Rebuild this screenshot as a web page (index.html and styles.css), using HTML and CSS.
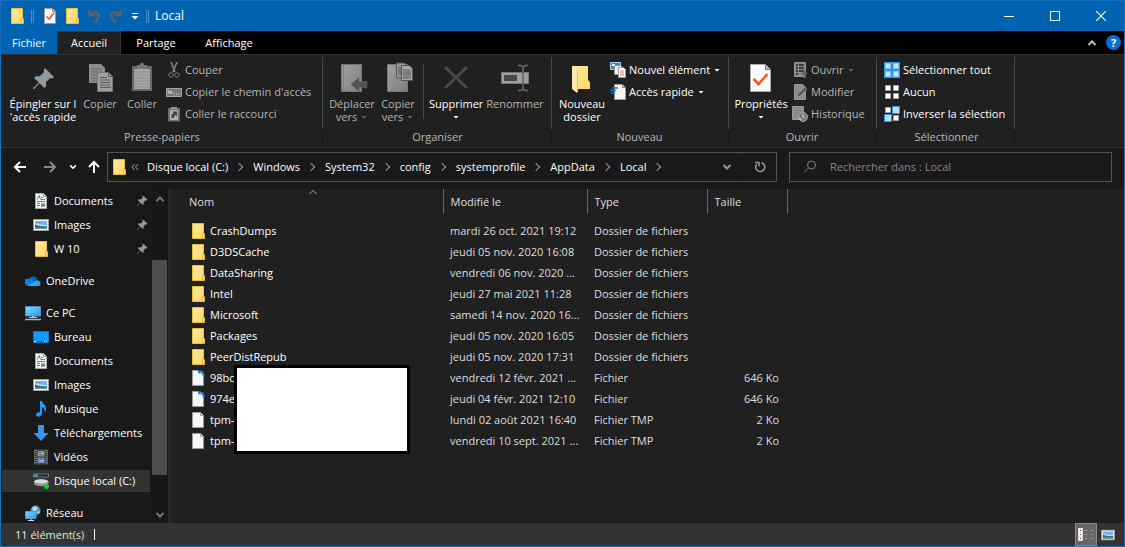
FILE: index.html
```html
<!DOCTYPE html>
<html lang="fr">
<head>
<meta charset="utf-8">
<title>Local</title>
<link rel="stylesheet" href="styles.css">
</head>
<body>
<svg class="defs" aria-hidden="true">
  <linearGradient id="gold" x1="0" y1="0" x2="1" y2="1"><stop offset="0" stop-color="#ffe89c"/><stop offset="1" stop-color="#ffd76a"/></linearGradient>
  <linearGradient id="steel" x1="0" y1="0" x2="1" y2="1"><stop offset="0" stop-color="#a2a2a2"/><stop offset="1" stop-color="#7e7e7e"/></linearGradient>
  <linearGradient id="sky" x1="0" y1="0" x2="1" y2="1"><stop offset="0" stop-color="#8ad4ff"/><stop offset="1" stop-color="#1f9cf0"/></linearGradient>
  <symbol id="folder" viewBox="0 0 16 16"><path d="M2.500.5h11v10l.5 1v4H2.500z" fill="url(#gold)" stroke="#e9bd3f"/><path d="M12.500 10.500h2v5h-2z" fill="#ffe28a" stroke="#e2b32f" stroke-width=".8"/></symbol>
  <symbol id="doc" viewBox="0 0 16 16"><path d="M2.500.5h8l3 3v12h-11z" fill="#f7f7f7" stroke="#9b9b9b"/><path d="M10.500.5v3h3" fill="#ddd" stroke="#9b9b9b"/></symbol>
  <symbol id="filelink" viewBox="0 0 16 16"><path d="M2.500.5h6l5 5v10h-11z" fill="#f4f6f8" stroke="#9b9b9b"/><path d="M8 0l5 1 2 5-2 1-1-3-4-1z" fill="#2b7fc6"/><path d="M10 2l3 3" stroke="#9fd0f5"/></symbol>
  <symbol id="check" viewBox="0 0 16 16"><path d="M2.500.5h8l3 3v12h-11z" fill="#fafafa" stroke="#9b9b9b"/><path d="M10.500.5v3h3" fill="#ccc" stroke="#888"/><path d="M4.500 8.500l2.500 2.500 5-6" fill="none" stroke="#f15a22" stroke-width="1.700"/></symbol>
  <symbol id="pin" viewBox="0 0 16 16"><path d="M9.600.8L15.200 6.400 14 7.300l-1.500-.2-2.300 2.600.1 2.700-1.200 1L6 10.400 1.500 15 .9 15.100 1 14.500 5.500 9.900 2.600 6.900l1-1.100 2.700.1L8.900 3.600 8.700 2z" fill="#8f9aa3"/></symbol>
  <symbol id="document" viewBox="0 0 16 16"><path d="M2.500.5h8l3 3v12h-11z" fill="#f7f7f7" stroke="#aaa"/><path d="M10.500.5v3h3" fill="#ddd" stroke="#999"/><path d="M4 6.500L6 2.500l1.500 4M8 4.500h2M8 6.500h4M4 8.500h8M4 10.500h3M4 12.500h3" fill="none" stroke="#2f8ad0"/><path d="M8 10h4v3.500H8z" fill="#59894e"/><path d="M8 10h4v1.500H8z" fill="#78b7ed"/></symbol>
  <symbol id="picture" viewBox="0 0 16 16"><path d="M.5 2.500h15v11H.5z" fill="#fff" stroke="#a0a0a0"/><path d="M2 4h12v8H2z" fill="#72aef2"/><path d="M2 6.500c4 0 4 1.500 12 1.500v1H2z" fill="#c9e4f6"/><path d="M2 7.500l5 1.500 7 .5V12H2z" fill="#35705b"/><path d="M2 10.500h12V12H2z" fill="#6c9099"/></symbol>
  <symbol id="cloud" viewBox="0 0 16 16"><path d="M4 6a4.500 4.500 0 0 1 8.500 1L9 11H2z" fill="#0864b8"/><path d="M1 12a3.200 3.200 0 0 1 3-6c3-.4 5 2 7 3l-2 4H3z" fill="#0f7ed8"/><path d="M2 13l7-4a4 4 0 0 1 4-1.500 3 3 0 0 1 1.500 5.200L13 13z" fill="#29a5ee"/></symbol>
  <symbol id="pc" viewBox="0 0 16 16"><path d="M.5 1.500h15v9.500H.5z" fill="url(#sky)" stroke="#4e92bf"/><path d="M4 12.500h8M7 11.500h2" stroke="#b8c7d3"/><path d="M0 14.500h16" stroke="#a9b7c2" stroke-width="1.500"/></symbol>
  <symbol id="desktop" viewBox="0 0 16 16"><path d="M.5 2.500h15v11H.5z" fill="#129cff" stroke="#0878cc"/><path d="M1 12.500h14" stroke="#0969b4"/><path d="M1 12.500h2M11 12.500h1M13 12.500h1" stroke="#d8efff"/></symbol>
  <symbol id="music" viewBox="0 0 16 16"><path d="M7 0h2c.3 3 4.500 4 4 8.500-.1 1.300-.8 2.500-1.500 3 .7-3.300-.5-4.500-2.500-5.500v6.500C9 15 6.500 16 4.500 15.500c-2-.6-2-3 0-4 1-.5 1.800-.4 2.500-.1z" fill="#14a0ff"/></symbol>
  <symbol id="download" viewBox="0 0 16 16"><path d="M5 0h6v8h4.500L8 16 .5 8H5z" fill="#3696e8"/></symbol>
  <symbol id="video" viewBox="0 0 16 16"><path d="M1.500 1h13v14h-13z" fill="#343434" stroke="#777" stroke-width=".7"/><path d="M3 1v14M13 1v14" stroke="#b0b0b0" stroke-dasharray="1 1"/><path d="M4.500 2h7v5.500h-7zM4.500 8.500h7V14h-7z" fill="#4b8ee6"/><path d="M5 5h3V3h3v3l-3 1H5zM5 13l3-3 3 1v2z" fill="#d7a431"/><path d="M6 6h4M7 10h2" stroke="#874c36"/></symbol>
  <symbol id="drive" viewBox="0 0 16 16"><path d="M.5 1h15v3H.5z" fill="#192630" stroke="#6d7b83"/><path d="M1 1.500h4v2H1z" fill="#27b0eb"/><path d="M1 8.500c2-3 12-3 14.500 0v2C13 14 4 14 1 11z" fill="#96999c"/><path d="M1 8.500c2-3 12-3 14.500 0-3 2.500-11 2.500-14.500 0z" fill="#d9dadb"/><circle cx="13.500" cy="13.500" r="2.500" fill="#20c72d"/></symbol>
  <symbol id="network" viewBox="0 0 16 16"><circle cx="10.500" cy="5.500" r="5" fill="#548bb0"/><path d="M7 3l3-2 3 2-2 3H8zM11 7l4-1-1 3z" fill="#b2dae8"/><path d="M.5 6.500h10.500v7H.5z" fill="url(#sky)" stroke="#4d9fce"/><path d="M3 15.500h6M6 14v1" stroke="#d4e1e9"/></symbol>
  <symbol id="undo" viewBox="0 0 14 16"><path d="M2 1v5.500h6M3 6C7 .8 13 4 12 8.500c-.6 3-3 4.500-5.500 6" fill="none" stroke="#56616b" stroke-width="2.600"/></symbol>
  <symbol id="down" viewBox="0 0 8 6"><path d="M1.500 2h5L4 4.500z" fill="currentColor"/></symbol>
  <symbol id="chev" viewBox="0 0 10 10"><path d="M1.500 3l3.500 3.500L8.500 3" fill="none" stroke="currentColor" stroke-width="2"/></symbol>
  <symbol id="thin" viewBox="0 0 10 10"><path d="M1.500 3l3.500 3.500L8.500 3" fill="none" stroke="currentColor"/></symbol>
  <symbol id="arrow" viewBox="0 0 14 14"><path d="M13 7H2M7 2L2 7l5 5" fill="none" stroke="currentColor" stroke-width="2"/></symbol>
</svg>

<div class="window">
  <header class="titlebar">
    <svg class="i16"><use href="#folder"/></svg>
    <span class="grip"></span>
    <button class="quick" aria-label="Propriétés"><svg class="i16"><use href="#check"/></svg></button>
    <button class="quick" aria-label="Nouveau dossier"><svg class="i16"><use href="#folder"/></svg></button>
    <button class="quick" aria-label="Annuler"><svg class="undo"><use href="#undo"/></svg></button>
    <button class="quick" aria-label="Rétablir"><svg class="undo redo"><use href="#undo"/></svg></button>
    <button class="quick more" aria-label="Personnaliser"><svg width="8" height="8"><path d="M1 1.500h6" stroke="#fff"/><path d="M.5 4h7L4 7.500z" fill="#fff"/></svg></button>
    <span class="grip"></span>
    <h1>Local</h1>
    <div class="winbuttons">
      <button aria-label="Réduire"><svg width="10" height="10"><path d="M0 5.500h10" stroke="#fff"/></svg></button>
      <button aria-label="Agrandir"><svg width="10" height="10"><path d="M.5.5h9v9h-9z" fill="none" stroke="#fff"/></svg></button>
      <button aria-label="Fermer"><svg width="10" height="10"><path d="M0 0l10 10M10 0L0 10" stroke="#fff" stroke-width="1.200"/></svg></button>
    </div>
  </header>

  <nav class="tabs">
    <button class="tab file">Fichier</button>
    <button class="tab active">Accueil</button>
    <button class="tab">Partage</button>
    <button class="tab wide">Affichage</button>
    <div class="tabtools">
      <button aria-label="Réduire le ruban"><svg class="i10 flip"><use href="#chev"/></svg></button>
      <button class="help" aria-label="Aide">?</button>
    </div>
  </nav>

  <section class="ribbon">
    <div class="group clip">
      <div class="tools">
        <button class="big pinbtn"><svg viewBox="0 0 32 32"><path d="M19 5l9 9-1.600 1.500-2.500-.3-4 4 .2 4-1.800 1.900-4.800-4.800L8 26l-1 .1.100-1 5.700-5.500-4.700-4.700 1.700-1.700 4 .1 4.200-4-.2-2.500z" fill="#8f9aa3" transform="translate(-1 1)"/></svg><span>Épingler sur l<br>'accès rapide</span></button>
        <button class="big off"><svg viewBox="0 0 32 32"><path d="M5 2h12l4 4v15H5z" fill="#8e8e8e"/><path d="M7 7h11M7 10h11M7 13h11M7 16h11M7 19h11" stroke="#666"/><path d="M13.500 10.500h11l4 4v15h-15z" fill="#a0a0a0" stroke="#777"/><path d="M24.500 10.500v4h4M16 15.500h7M16 18h10.500M16 20.500h10.500M16 23h10.500M16 25.500h10.500" fill="none" stroke="#585858"/></svg><span>Copier</span></button>
        <button class="big off"><svg viewBox="0 0 32 32"><path d="M6 4h20v25H6z" fill="#686868"/><path d="M8 7h16v20H8z" fill="#a7a7a7"/><path d="M11 3h3c0-3 4-3 4 0h3v4H11z" fill="#777"/><path d="M8 10h16M8 13h16M8 16h16M8 19h16M8 22h16M8 25h16" stroke="#8b8b8b"/></svg><span>Coller</span></button>
        <div class="stack">
          <button class="small off"><svg viewBox="0 0 16 16"><path d="M5 0l4 10M11 0L7 10" stroke="#858585" stroke-width="1.500"/><circle cx="5" cy="13" r="2.200" fill="none" stroke="#777"/><circle cx="11" cy="13" r="2.200" fill="none" stroke="#777"/></svg>Couper</button>
          <button class="small off"><svg viewBox="0 0 16 16"><path d="M.5 4.500h15v8H.5z" fill="#777" stroke="#a6a6a6"/><path d="M2 6l1.500 4L5 7l1.500 3M8 10h1M10 10h1M12 10h1" fill="none" stroke="#ddd"/></svg>Copier le chemin d'accès</button>
          <button class="small off"><svg viewBox="0 0 16 16"><path d="M2 2h12v13.500H2z" fill="#6f6f6f"/><path d="M4 4h8v10H4z" fill="#b2b2b2"/><path d="M5 1h6v2H5z" fill="#999"/><path d="M5.500 12V9l2-2L6 5.500h5v5L9.500 9 8 10.500V12z" fill="#444"/></svg>Coller le raccourci</button>
        </div>
      </div>
      <h2>Presse-papiers</h2>
    </div>

    <div class="group organise">
      <div class="tools">
        <button class="big off"><svg viewBox="0 0 32 32"><path d="M5.500 2.500h20v27h-20z" fill="url(#steel)" stroke="#777"/><path d="M7.500 3v26" stroke="#808080"/><path d="M15 22.500l8-7v4h8v6h-8v4z" fill="#535353" stroke="#666" stroke-width=".6"/></svg><span>Déplacer<br>vers <svg class="dd"><use href="#down"/></svg></span></button>
        <button class="big off"><svg viewBox="0 0 32 32"><path d="M5.500 2.500h20v27h-20z" fill="url(#steel)" stroke="#777"/><path d="M14.500 1h8l3 3v12h-11z" fill="#969696" stroke="#555"/><path d="M16 6h8M16 8h8M16 10h8M16 12h8" stroke="#555"/><path d="M19.500 3.500h8l3 3v12h-11z" fill="#a7a7a7" stroke="#555"/><path d="M21 8h8M21 10h8M21 12h8M21 14h8M21 16h8" stroke="#555"/></svg><span>Copier<br>vers <svg class="dd"><use href="#down"/></svg></span></button>
        <i class="split"></i>
        <button class="big"><svg viewBox="0 0 32 32"><path d="M5 5l22 21M27 5L5 26" stroke="#484848" stroke-width="3"/></svg><span>Supprimer<br><svg class="dd"><use href="#down"/></svg></span></button>
        <button class="big off"><svg viewBox="0 0 32 32"><path d="M2.500 10.500h27v11h-27z" fill="#a0a0a0" stroke="#777"/><path d="M5 13h13v6H5z" fill="#484848"/><path d="M19 3.500h3l2 1.500 2-1.500h3M24 5v23M19 28.500h3l2-1.500 2 1.500h3" fill="none" stroke="#666" stroke-width="1.600"/></svg><span>Renommer</span></button>
      </div>
      <h2>Organiser</h2>
    </div>

    <div class="group create">
      <div class="tools">
        <button class="big"><svg viewBox="0 0 32 32"><path d="M6 4h16v14l2 2v7H8z" fill="url(#gold)"/><path d="M6 4l5 4v23l-5-4z" fill="#ffe9a8"/><path d="M11.500 8v22" stroke="#e9bd54"/></svg><span>Nouveau<br>dossier</span></button>
        <div class="stack">
          <button class="small"><svg viewBox="0 0 16 16"><path d="M.5.5h10v7H.5z" fill="#2d89c8" stroke="#a4d5ef"/><path d="M2 2h3v2H2z" fill="#fff"/><path d="M4.500 3.500h6l2 2v7h-8z" fill="#eee" stroke="#999"/><path d="M8.500 5.500h5l2 2v8h-7z" fill="#fff" stroke="#999"/><path d="M10 9h4M10 11h4M10 13h4" stroke="#e37b7b"/></svg>Nouvel élément<svg class="dd"><use href="#down"/></svg></button>
          <button class="small"><svg viewBox="0 0 16 16"><path d="M4.500.5h8l3 3v12h-11z" fill="#f7f7f7" stroke="#999"/><path d="M12.500.5v3h3" fill="none" stroke="#777"/><path d="M2 4h6M0 6.500h6M1 9h4" stroke="#2a75b3" stroke-width="1.500"/></svg>Accès rapide<svg class="dd"><use href="#down"/></svg></button>
        </div>
      </div>
      <h2>Nouveau</h2>
    </div>

    <div class="group open">
      <div class="tools">
        <button class="big"><svg viewBox="0 0 32 32"><path d="M5.500 2.500h15l5 5v22h-20z" fill="#fafafa" stroke="#aaa"/><path d="M20.500 2.500v5h5" fill="#bbb" stroke="#777"/><path d="M8.500 17l5 5 9-10" fill="none" stroke="#f15a22" stroke-width="2.600"/></svg><span>Propriétés<br><svg class="dd"><use href="#down"/></svg></span></button>
        <div class="stack">
          <button class="small off"><svg viewBox="0 0 16 16"><path d="M2.500.5h11v14h-11z" fill="#888" stroke="#999"/><path d="M4 3h2M7 3h5M4 6h2M7 6h5M4 9h2M7 9h5M4 12h2" stroke="#3e3e3e" stroke-width="2"/><path d="M11 16v-4H9l3.500-4 3.500 4h-2v4z" fill="#666"/></svg>Ouvrir<svg class="dd"><use href="#down"/></svg></button>
          <button class="small off"><svg viewBox="0 0 16 16"><path d="M2.500.5h8l3 3v12h-11z" fill="#8d8d8d" stroke="#999"/><path d="M5 13l1-3 7-7 2 2-7 7z" fill="#555" stroke="#aaa" stroke-width=".5"/></svg>Modifier</button>
          <button class="small off"><svg viewBox="0 0 16 16"><path d="M.5.5h11v13H.5z" fill="#8b8b8b" stroke="#999"/><circle cx="11" cy="11" r="4.500" fill="#777" stroke="#aaa"/><path d="M11 8v3l2 1M7 12l3 2" fill="none" stroke="#ddd"/></svg>Historique</button>
        </div>
      </div>
      <h2>Ouvrir</h2>
    </div>

    <div class="group select">
      <div class="tools">
        <div class="stack">
          <button class="small"><svg viewBox="0 0 16 16"><path d="M0 0h16v16H0z" fill="#3097e6"/><path d="M1.500 1.500h5v5h-5zM9.500 1.500h5v5h-5zM1.500 9.500h5v5h-5zM9.500 9.500h5v5h-5z" fill="#c5e6ff" stroke="#77c3fa"/></svg>Sélectionner tout</button>
          <button class="small"><svg viewBox="0 0 16 16"><path d="M1.500 1.500h5v5h-5zM9.500 1.500h5v5h-5zM1.500 9.500h5v5h-5zM9.500 9.500h5v5h-5z" fill="#fff" stroke="#a5a5a5"/></svg>Aucun</button>
          <button class="small"><svg viewBox="0 0 16 16"><path d="M1.500 1.500h5v5h-5zM9.500 9.500h5v5h-5z" fill="#fff" stroke="#a5a5a5"/><path d="M8.500.5h7v7h-7zM.5 8.500h7v7h-7z" fill="#b6dfff" stroke="#3097e6"/></svg>Inverser la sélection</button>
        </div>
      </div>
      <h2>Sélectionner</h2>
    </div>
  </section>

  <div class="navbar">
    <div class="history">
      <button aria-label="Précédent"><svg class="i14"><use href="#arrow"/></svg></button>
      <button class="dim" aria-label="Suivant"><svg class="i14 mirror"><use href="#arrow"/></svg></button>
      <button class="recent" aria-label="Récents"><svg class="i8"><use href="#chev"/></svg></button>
      <button class="up" aria-label="Dossier parent"><svg class="i14 turn"><use href="#arrow"/></svg></button>
    </div>
    <div class="address">
      <svg class="i16"><use href="#folder"/></svg>
      <svg class="root" width="8" height="8"><path d="M3.500 1L1 4l2.500 3M7 1L4.500 4 7 7" fill="none" stroke="#999"/></svg>
      <ol class="crumbs">
        <li><a href="#">Disque local (C:)</a></li><li><a href="#">Windows</a></li><li><a href="#">System32</a></li><li><a href="#">config</a></li><li><a href="#">systemprofile</a></li><li><a href="#">AppData</a></li><li><a href="#">Local</a></li>
      </ol>
      <button class="hist" aria-label="Emplacements précédents"><svg class="i10"><use href="#chev"/></svg></button>
      <button class="refresh" aria-label="Actualiser"><svg width="12" height="12"><path d="M7.500 1.700A4.500 4.500 0 1 1 2.700 3.200M1 1.500h4v4" fill="none" stroke="#999" stroke-width="1.500"/></svg></button>
    </div>
    <label class="search">
      <svg width="14" height="14"><circle cx="8.500" cy="5" r="4" fill="none" stroke="#858585"/><path d="M5.500 8L1 12.500" stroke="#858585"/></svg>
      <input type="text" placeholder="Rechercher dans : Local" aria-label="Rechercher dans : Local">
    </label>
  </div>

  <main class="body">
    <nav class="tree">
      <ul>
        <li><a class="sub" href="#"><svg class="i16"><use href="#document"/></svg>Documents<svg class="pinned"><use href="#pin"/></svg></a></li>
        <li><a class="sub" href="#"><svg class="i16"><use href="#picture"/></svg>Images<svg class="pinned"><use href="#pin"/></svg></a></li>
        <li><a class="sub" href="#"><svg class="i16"><use href="#folder"/></svg>W 10<svg class="pinned"><use href="#pin"/></svg></a></li>
      </ul>
      <ul><li><a href="#"><svg class="i16"><use href="#cloud"/></svg>OneDrive</a></li></ul>
      <ul>
        <li><a href="#"><svg class="i16"><use href="#pc"/></svg>Ce PC</a></li>
        <li><a class="sub" href="#"><svg class="i16"><use href="#desktop"/></svg>Bureau</a></li>
        <li><a class="sub" href="#"><svg class="i16"><use href="#document"/></svg>Documents</a></li>
        <li><a class="sub" href="#"><svg class="i16"><use href="#picture"/></svg>Images</a></li>
        <li><a class="sub" href="#"><svg class="i16"><use href="#music"/></svg>Musique</a></li>
        <li><a class="sub" href="#"><svg class="i16"><use href="#download"/></svg>Téléchargements</a></li>
        <li><a class="sub" href="#"><svg class="i16"><use href="#video"/></svg>Vidéos</a></li>
        <li><a class="sub current" href="#"><svg class="i16"><use href="#drive"/></svg>Disque local (C:)</a></li>
      </ul>
      <ul><li><a href="#"><svg class="i16"><use href="#network"/></svg>Réseau</a></li></ul>
    </nav>
    <div class="scroll" aria-hidden="true">
      <svg class="i10 flip"><use href="#chev"/></svg>
      <div class="thumb"></div>
      <svg class="i10"><use href="#chev"/></svg>
    </div>
    <section class="files">
      <table>
        <colgroup><col class="c1"><col class="c2"><col class="c3"><col class="c4"></colgroup>
        <thead><tr><th>Nom<svg class="sort"><use href="#thin"/></svg></th><th>Modifié le</th><th>Type</th><th>Taille</th></tr></thead>
        <tbody>
          <tr><td><span><svg class="i16"><use href="#folder"/></svg>CrashDumps</span></td><td>mardi 26 oct. 2021 19:12</td><td>Dossier de fichiers</td><td></td></tr>
          <tr><td><span><svg class="i16"><use href="#folder"/></svg>D3DSCache</span></td><td>jeudi 05 nov. 2020 16:08</td><td>Dossier de fichiers</td><td></td></tr>
          <tr><td><span><svg class="i16"><use href="#folder"/></svg>DataSharing</span></td><td>vendredi 06 nov. 2020 ...</td><td>Dossier de fichiers</td><td></td></tr>
          <tr><td><span><svg class="i16"><use href="#folder"/></svg>Intel</span></td><td>jeudi 27 mai 2021 11:28</td><td>Dossier de fichiers</td><td></td></tr>
          <tr><td><span><svg class="i16"><use href="#folder"/></svg>Microsoft</span></td><td>samedi 14 nov. 2020 16...</td><td>Dossier de fichiers</td><td></td></tr>
          <tr><td><span><svg class="i16"><use href="#folder"/></svg>Packages</span></td><td>jeudi 05 nov. 2020 16:05</td><td>Dossier de fichiers</td><td></td></tr>
          <tr><td><span><svg class="i16"><use href="#folder"/></svg>PeerDistRepub</span></td><td>jeudi 05 nov. 2020 17:31</td><td>Dossier de fichiers</td><td></td></tr>
          <tr><td><span><svg class="i16"><use href="#filelink"/></svg>98bc</span></td><td>vendredi 12 févr. 2021 ...</td><td>Fichier</td><td>646 Ko</td></tr>
          <tr><td><span><svg class="i16"><use href="#filelink"/></svg>974e</span></td><td>jeudi 04 févr. 2021 12:10</td><td>Fichier</td><td>646 Ko</td></tr>
          <tr><td><span><svg class="i16"><use href="#doc"/></svg>tpm-</span></td><td>lundi 02 août 2021 16:40</td><td>Fichier TMP</td><td>2 Ko</td></tr>
          <tr><td><span><svg class="i16"><use href="#doc"/></svg>tpm-</span></td><td>vendredi 10 sept. 2021 ...</td><td>Fichier TMP</td><td>2 Ko</td></tr>
        </tbody>
      </table>
      <div class="mask"></div>
    </section>
  </main>

  <footer class="status">
    <span class="count">11 élément(s)</span>
    <button class="view on" aria-label="Détails"><svg width="16" height="14"><path d="M0 0h5v13H0z" fill="#ddd"/><path d="M1 1h3v3H1zM1 5h3v3H1zM1 9h3v3H1z" fill="#fff"/><path d="M2 2.500h1" stroke="#444"/><path d="M2 6.500h1" stroke="#1479e0"/><path d="M2 10.500h1" stroke="#d22"/><path d="M6 2.500h4M12 2.500h4M6 6.500h4M12 6.500h4M6 10.500h4M12 10.500h4" stroke="#888"/></svg></button>
    <button class="view" aria-label="Grandes icônes"><svg width="14" height="14" viewBox="0 0 16 16"><use href="#picture"/></svg></button>
  </footer>
</div>
</body>
</html>
```
FILE: styles.css
```css
* { box-sizing: border-box; }
html, body { height: 100%; }
body {
  margin: 0;
  background: #191919;
  color: #fff;
  font: 11px/16px "Open Sans", "Noto Sans", sans-serif;
}
button, input { font: inherit; color: inherit; background: none; border: 0; padding: 0; }
button { display: flex; align-items: center; justify-content: center; }
a { color: inherit; text-decoration: none; }
ul, ol { list-style: none; margin: 0; padding: 0; }
h1, h2 { margin: 0; font: inherit; }
svg { flex: none; display: block; }
.defs { position: absolute; width: 0; height: 0; }
.i8 { width: 8px; height: 8px; }
.i10 { width: 10px; height: 10px; }
.i14 { width: 14px; height: 14px; }
.i16 { width: 16px; height: 16px; }
.flip { transform: rotate(180deg); }
.mirror { transform: scaleX(-1); }
.turn { transform: rotate(90deg); }

.window {
  height: 100vh;
  display: flex;
  flex-direction: column;
  border: 1px solid #1470bd;
}
.window > * { flex-shrink: 0; }

.titlebar { display: flex; align-items: center; height: 30px; padding-left: 8px; background: #0063b1; }
.grip { width: 3px; height: 13px; margin-left: 6px; border: 1px solid #4b93cb; border-width: 0 1px; }
.titlebar .grip + .quick { margin-left: 5px; }
.quick { width: 22px; height: 22px; }
.undo { width: 14px; height: 15px; }
.redo { transform: scaleX(-1); }
.more { width: 16px; }
.more + .grip { margin-left: 3px; }
.titlebar h1 { margin-left: 6px; font-size: 12px; flex: 1; }
.winbuttons { display: flex; }
.winbuttons button { width: 46px; height: 30px; }

.tabs { display: flex; height: 23px; background: #000; }
.tab { width: 70px; }
.tab.file { width: 56px; background: #0063b1; }
.tab.active { width: 64px; background: #202020; border: 1px solid #333; border-bottom: 0; }
.tab.wide { width: 76px; }
.tabtools { display: flex; align-items: center; gap: 9px; margin-left: auto; padding-right: 3px; color: #bbb; }
.help { width: 15px; height: 15px; border-radius: 50%; background: #0b6fd0; color: #fff; font-weight: 700; }

.ribbon {
  display: flex;
  background: #202020;
  border: 1px solid #303030;
  border-width: 1px 0;
  padding: 2px 0;
}
.group {
  display: flex;
  flex-direction: column;
  padding: 2px 0 0 4px;
  background: linear-gradient(#484848 0 72px, #181818 72px) right / 1px 100% no-repeat;
}
.group h2 { color: #b8b8b8; text-align: center; line-height: 16px; }
.clip { width: 322px; padding-left: 6px; }
.clip h2 { padding-right: 6px; }
.organise { width: 229px; padding-left: 6px; }
.organise h2, .create h2 { padding-right: 6px; }
.create { width: 177px; }
.open { width: 148px; }
.open h2, .select h2 { padding-right: 6px; }
.select { width: 138px; padding-left: 7px; }
.tools { display: flex; height: 70px; }
.big { flex-direction: column; justify-content: flex-start; min-width: 42px; padding-top: 3px; line-height: 13px; }
.big > svg { width: 32px; height: 32px; }
.big > span { margin-top: 3px; white-space: nowrap; }
.pinbtn { min-width: 72px; }
.organise .big { min-width: 46px; }
.organise .split + .big { margin-left: 5px; min-width: 54px; }
.organise .split + .big + .big { min-width: 63px; }
.create .big { min-width: 52px; }
.open .big { min-width: 56px; }
.off { color: #b4b4b4; }
.off .dd { color: #666; }
.dd { display: inline-block; width: 8px; height: 6px; vertical-align: 1px; }
.split { width: 1px; height: 55px; margin: 5px 0 0 2px; background: #484848; }
.stack { display: flex; flex-direction: column; }
.clip .stack, .open .stack { margin-left: 3px; }
.create .stack { margin-left: 2px; }
.small { height: 22px; gap: 3px; justify-content: flex-start; white-space: nowrap; }
.small > svg { width: 16px; height: 16px; }
.small > .dd { width: 8px; height: 6px; }

.navbar { display: flex; align-items: center; padding: 4px 12px 7px 12px; }
.history { display: flex; align-items: center; width: 94px; }
.history .dim { margin-left: 16px; color: #888; }
.history .recent { margin-left: 12px; }
.history .up { margin-left: 10px; }
.address, .search { display: flex; align-items: center; height: 30px; border: 1px solid #535353; min-width: 0; }
.address { flex: 665; padding-left: 3px; }
.root { margin-left: 4px; }
.crumbs { display: flex; flex: 1; margin-left: 8px; min-width: 0; }
.crumbs li { display: flex; align-items: center; white-space: nowrap; }
.crumbs li::after {
  content: "";
  width: 5px;
  height: 5px;
  margin: 0 11px 0 8px;
  border: solid #999;
  border-width: 1px 1px 0 0;
  transform: rotate(45deg);
}
.address button { height: 28px; color: #999; }
.hist { width: 32px; }
.refresh { width: 33px; border-left: 1px solid #141414; }
.search { flex: 308; margin-left: 12px; padding-left: 13px; }
.search input { flex: 1; min-width: 0; margin-left: 13px; outline: 0; }
.search input::placeholder { color: #858585; opacity: 1; }

.window > .body { display: flex; flex: 1 1 0; min-height: 0; }
.tree { width: 149px; padding-left: 1px; overflow: hidden; }
.tree ul + ul { margin-top: 8px; }
.tree a { display: flex; align-items: center; gap: 5px; height: 24px; padding: 0 2px 0 23px; border: solid transparent; border-width: 1px 0; background-clip: padding-box; white-space: nowrap; }
.tree .sub { padding-left: 31px; }
.tree .current { background-color: #333; }
.pinned { width: 12px; height: 12px; margin-left: auto; }
.scroll { width: 18px; display: flex; flex-direction: column; align-items: center; padding: 5px 0 3px 1px; background: #171717; color: #777; }
.thumb { width: 15px; flex: 1; margin: 56px 0 35px; background: #4d4d4d; }
.files { position: relative; flex: 1; background: #202020; border-left: 2px solid #292929; }
.files table { border-collapse: collapse; table-layout: fixed; width: 617px; }
.c1 { width: 273px; }
.c2 { width: 144px; }
.c3 { width: 120px; }
.c4 { width: 80px; }
th { position: relative; height: 25px; padding: 0 0 0 7px; border-right: 1px solid #636363; font-weight: 400; text-align: left; color: #dedede; }
th:first-child { padding-left: 19px; }
.sort { position: absolute; top: -2px; left: 138px; width: 10px; height: 10px; transform: rotate(180deg); color: #aaa; }
tbody::before { content: ""; display: block; height: 6px; }
td { height: 21px; padding: 0 0 0 7px; color: #dedede; white-space: nowrap; }
td:first-child { padding-left: 20px; color: #fff; }
td:last-child { padding-right: 8px; text-align: right; }
td span { display: flex; align-items: center; gap: 4px; }
.mask { position: absolute; left: 64px; top: 176px; width: 176px; height: 89px; background: #fff; border: 3px solid #000; }

.status { display: flex; align-items: center; height: 23px; padding: 0 5px 0 14px; background: #333; }
.count { margin-right: auto; color: #e5e5d0; }
.count::after { content: ""; display: inline-block; height: 11px; margin-left: 10px; border-left: 1px solid #fff; vertical-align: -1px; }
.view { width: 22px; height: 23px; }
.view.on { background: #666; border: 1px solid #888; }
```
